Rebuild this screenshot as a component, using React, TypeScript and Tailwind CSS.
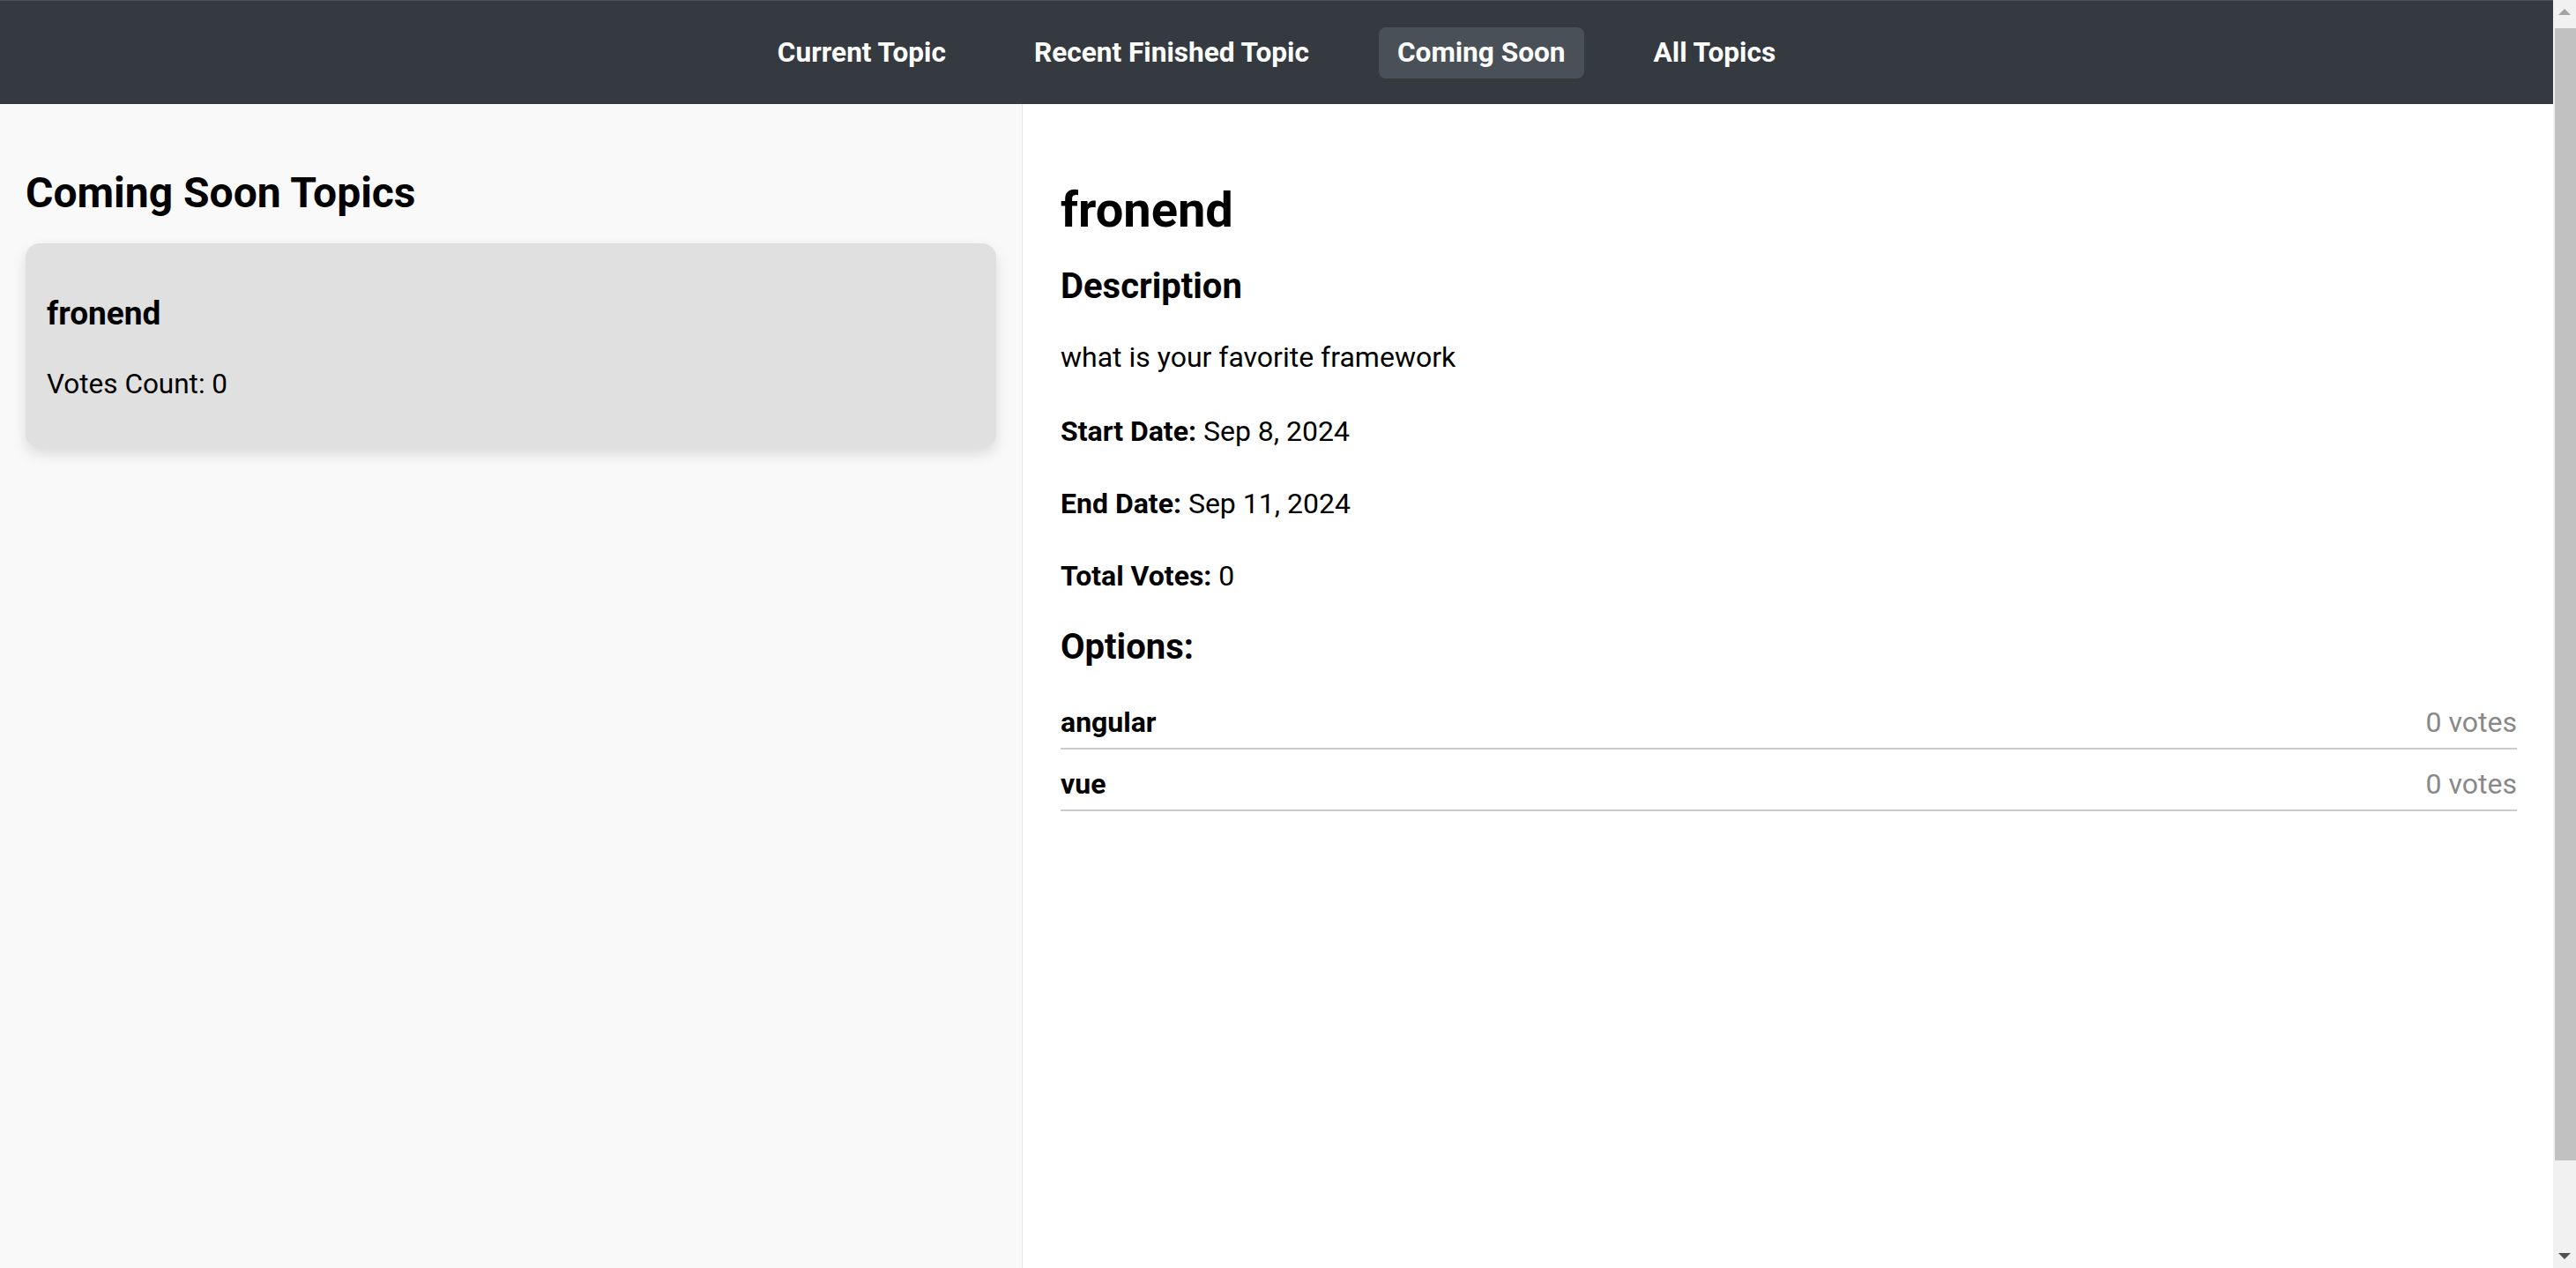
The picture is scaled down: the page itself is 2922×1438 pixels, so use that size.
import React from "react";

const navItems = ["Current Topic", "Recent Finished Topic", "Coming Soon", "All Topics"];

function NavBar() {
  return (
    <nav className="flex h-[118px] shrink-0 items-center justify-center gap-[58px] border-t border-[#4b5056] bg-[#343a40]">
      {navItems.map((item) =>
        item === "Coming Soon" ? (
          <a
            key={item}
            className="cursor-pointer rounded-[8px] bg-[#495057] px-[21px] py-[10px] text-[31.6px] leading-[38px] font-bold text-white"
          >
            {item}
          </a>
        ) : (
          <a
            key={item}
            className="cursor-pointer rounded-[8px] px-[21px] py-[10px] text-[31.6px] leading-[38px] font-bold text-white"
          >
            {item}
          </a>
        )
      )}
    </nav>
  );
}

function TopicList() {
  return (
    <aside className="w-[1160px] shrink-0 border-r border-[#e6e6e6] bg-[#f9f9f9] px-[29px] pt-[73px]">
      <h2 className="text-[48px] leading-[56px] font-bold">Coming Soon Topics</h2>
      <div className="mt-[29px] cursor-pointer rounded-[16px] bg-[#e0e0e0] px-[24px] pt-[58px] pb-[53px] shadow-[0_7px_16px_rgba(0,0,0,0.12)]">
        <h3 className="text-[37px] leading-[44px] font-bold">fronend</h3>
        <p className="mt-[39px] text-[31.5px] leading-[38px]">Votes Count: 0</p>
      </div>
    </aside>
  );
}

const options = [
  { name: "angular", votes: 0 },
  { name: "vue", votes: 0 },
];

function TopicDetail() {
  return (
    <section className="min-w-0 flex-1 bg-white pt-[87px] pr-[41px] pl-[43px]">
      <h1 className="text-[56px] leading-[66px] font-bold">fronend</h1>
      <h3 className="mt-[30px] text-[40px] leading-[47px] font-bold">Description</h3>
      <p className="mt-[38px] text-[32px] leading-[38px]">what is your favorite framework</p>
      <p className="mt-[46px] text-[32px] leading-[38px]">
        <strong className="font-bold">Start Date:</strong> Sep 8, 2024
      </p>
      <p className="mt-[44px] text-[32px] leading-[38px]">
        <strong className="font-bold">End Date:</strong> Sep 11, 2024
      </p>
      <p className="mt-[44px] text-[32px] leading-[38px]">
        <strong className="font-bold">Total Votes:</strong> 0
      </p>
      <h3 className="mt-[38px] text-[40px] leading-[47px] font-bold">Options:</h3>
      <ul className="mt-[23px]">
        {options.map((o) => (
          <li
            key={o.name}
            className="flex items-baseline justify-between border-b-2 border-[#cccccc] pt-[20px] pb-[10px] text-[32px] leading-[38px]"
          >
            <span className="font-bold">{o.name}</span>
            <span className="text-[#888888]">{o.votes} votes</span>
          </li>
        ))}
      </ul>
    </section>
  );
}

function ScrollBar() {
  return (
    <div className="flex w-[26px] shrink-0 flex-col bg-[#f1f1f1]">
      <div className="flex h-[28px] items-center justify-center">
        <svg width="14" height="8" viewBox="0 0 14 8">
          <path d="M7 0 L14 7 L0 7 Z" fill="#a3a3a3" />
        </svg>
      </div>
      <div className="flex-1">
        <div className="mt-[4px] ml-[2px] h-[1284px] bg-[#c1c1c1]" />
      </div>
      <div className="flex h-[28px] items-center justify-center">
        <svg width="14" height="8" viewBox="0 0 14 8">
          <path d="M0 1 L14 1 L7 8 Z" fill="#505050" />
        </svg>
      </div>
    </div>
  );
}

export default function App() {
  return (
    <div className="flex h-screen overflow-hidden bg-white font-['Roboto','Noto_Sans',sans-serif] text-black">
      <div className="flex min-w-0 flex-1 flex-col">
        <NavBar />
        <main className="flex flex-1">
          <TopicList />
          <TopicDetail />
        </main>
      </div>
      <ScrollBar />
    </div>
  );
}
